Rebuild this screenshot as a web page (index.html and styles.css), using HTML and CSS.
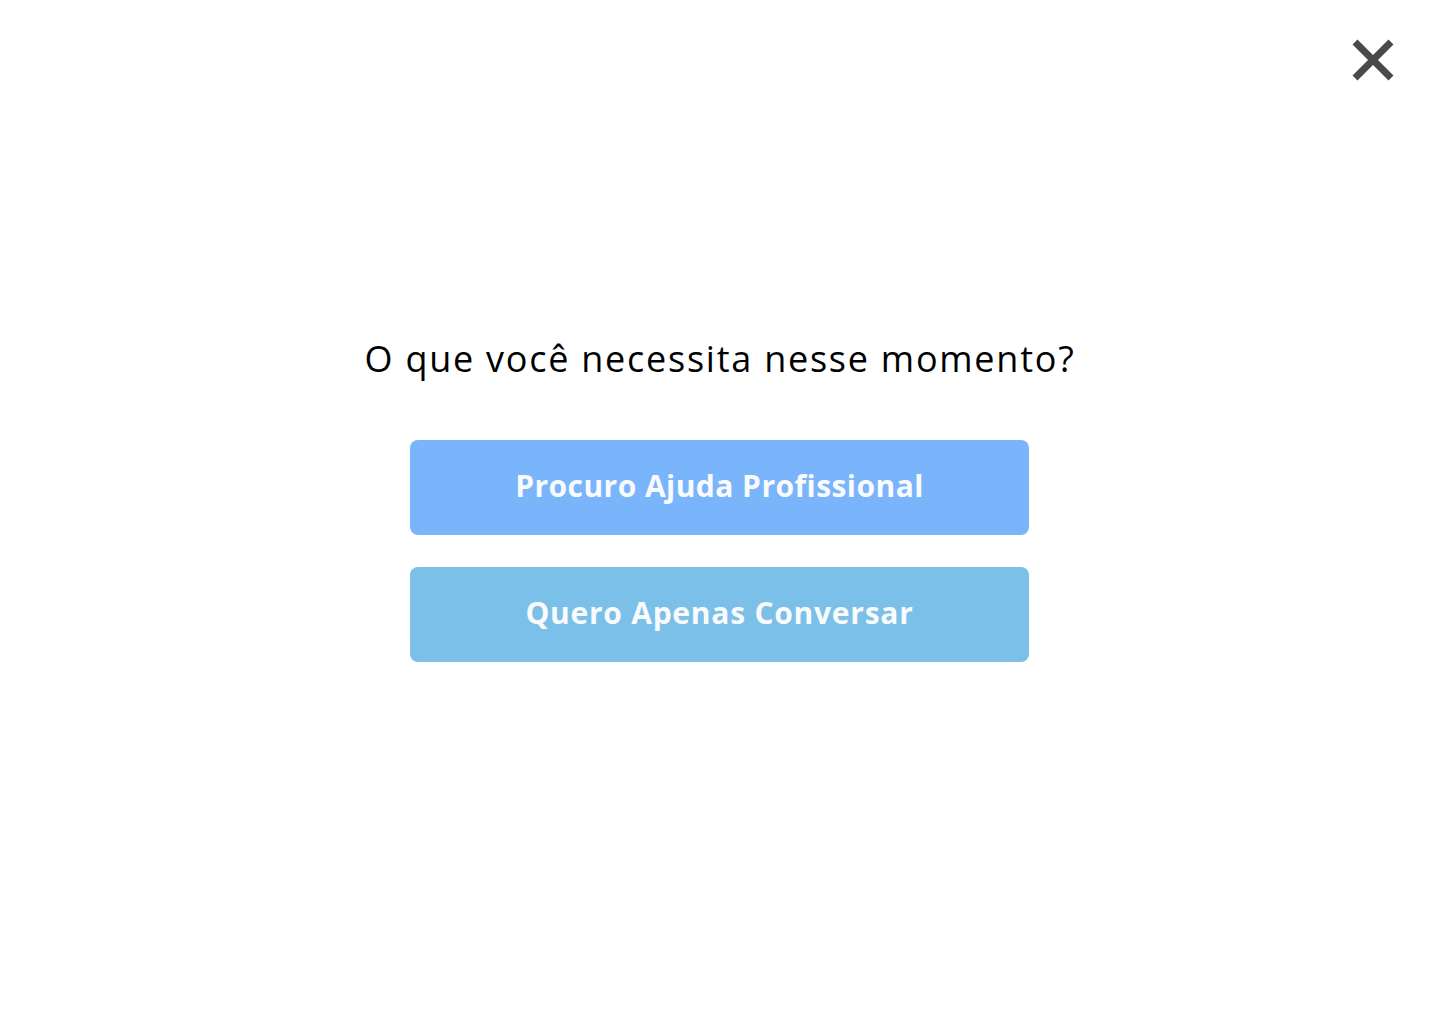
FILE: index.html
```html
<!DOCTYPE html>
<html lang="pt-BR">
<head>
<meta charset="utf-8">
<title>O que você necessita</title>
<link rel="stylesheet" href="styles.css">
</head>
<body>
<div class="page">
  <button class="close" aria-label="Fechar">
    <svg width="44" height="44" viewBox="0 0 44 44"><path d="M4 4 L40 40 M40 4 L4 40" stroke="#4a4a4a" stroke-width="7" stroke-linecap="butt"/></svg>
  </button>
  <main class="content">
    <h1 class="title">O que você necessita nesse momento?</h1>
    <div class="options">
      <button class="option option-pro">Procuro Ajuda Profissional</button>
      <button class="option option-talk">Quero Apenas Conversar</button>
    </div>
  </main>
</div>
</body>
</html>
```
FILE: styles.css
```css
html, body {
  margin: 0;
  padding: 0;
  background: #ffffff;
}
.page {
  position: relative;
  width: 1440px;
  height: 1024px;
  font-family: "Open Sans", "Noto Sans", sans-serif;
}
.close {
  position: absolute;
  top: 38px;
  right: 45px;
  padding: 0;
  border: 0;
  background: none;
  width: 44px;
  height: 44px;
  cursor: pointer;
}
.close svg { display: block; }
.content {
  display: flex;
  flex-direction: column;
  align-items: center;
  padding-top: 332px;
}
.title {
  margin: 0;
  font-size: 36px;
  line-height: 54px;
  font-weight: 400;
  letter-spacing: 1.75px;
  color: #000;
}
.options {
  display: flex;
  flex-direction: column;
  gap: 32px;
  margin-top: 54px;
  width: 619px;
  margin-left: -1px;
}
.option {
  height: 95px;
  padding: 0 0 4px;
  border: 0;
  border-radius: 8px;
  color: #f9fafb;
  font-family: "Open Sans", "Noto Sans", sans-serif;
  font-size: 30px;
  font-weight: 700;
  letter-spacing: 0.45px;
  cursor: pointer;
}
.option-pro { background: #7ab5fc; }
.option-talk { background: #7bc0e8; letter-spacing: 0.75px; }
```
